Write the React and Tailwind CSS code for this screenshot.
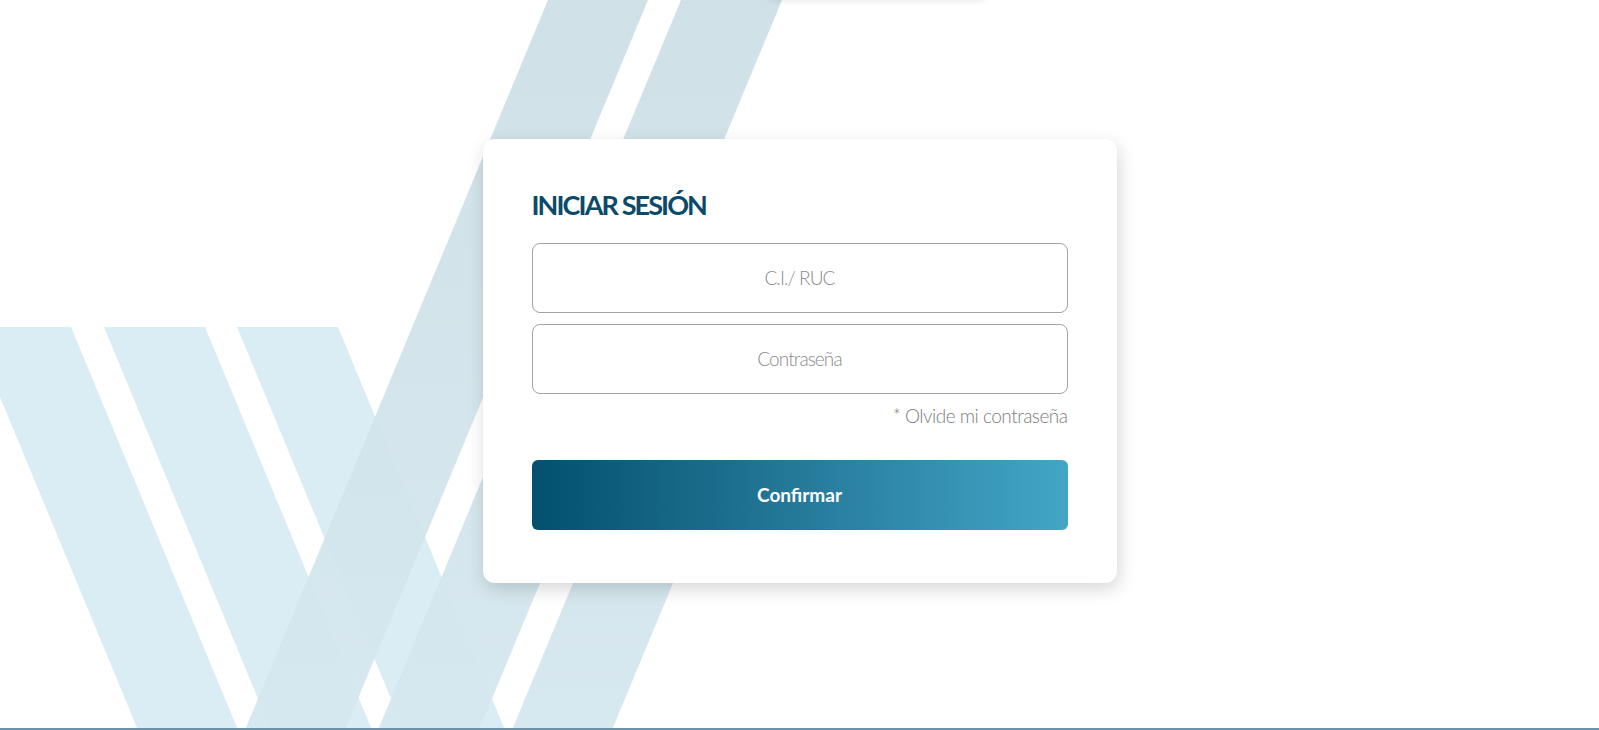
import React from 'react';

// fondo decorativo: franjas diagonales (marca)
function Backdrop() {
  return (
    <svg className="absolute inset-0" width="1599" height="730" viewBox="0 0 1599 730">
      <defs>
        <linearGradient id="darkStripe" x1="0" y1="0" x2="0" y2="1">
          <stop offset="0" stopColor="#cddfe6" />
          <stop offset="1" stopColor="#d5e8ef" />
        </linearGradient>
      </defs>
      {/* franjas claras, bajan hacia la derecha */}
      <polygon points="-29,327 71,327 238,730 138,730" fill="#daedf4" />
      <polygon points="104,327 205,327 372,730 271,730" fill="#daedf4" />
      <polygon points="237,327 338,327 505,730 404,730" fill="#daedf4" />
      {/* franjas oscuras, suben hacia la derecha */}
      <polygon points="548,0 648,0 345,730 245,730" fill="url(#darkStripe)" opacity="0.95" />
      <polygon points="681,0 782,0 479,730 378,730" fill="url(#darkStripe)" opacity="0.95" />
      <polygon points="732,200 832,200 612,730 512,730" fill="url(#darkStripe)" opacity="0.95" />
    </svg>
  );
}

export default function App() {
  return (
    <div className="relative w-full h-[730px] overflow-hidden bg-white" style={{ fontFamily: 'Lato, "Open Sans", sans-serif' }}>
      <Backdrop />

      {/* borde inferior del bloque superior, fuera de la vista */}
      <div className="absolute left-[770px] top-[-20px] w-[215px] h-[20px] bg-white shadow-[0_0_6px_rgba(0,0,0,0.12)]" />

      <main className="relative h-[728px] pb-[6px] flex items-center justify-center">
        <div className="w-[634px] bg-white rounded-[12px] shadow-[2px_6px_18px_rgba(0,0,0,0.16)] px-[49px] pt-[49px] pb-[53px]">
          <h1 className="text-[27px] leading-[34px] font-bold text-[#0b4a68] tracking-[-1.9px]">INICIAR SESIÓN</h1>

          <form className="mt-[21px] flex flex-col" onSubmit={e => e.preventDefault()}>
            <input
              type="text"
              placeholder="C.I./ RUC"
              className="h-[70px] w-full rounded-[8px] border border-[#a3a3a3] bg-white text-center text-[19px] tracking-[-0.9px] font-light text-[#555] placeholder:text-[#8a8a8a] outline-none"
            />
            <input
              type="password"
              placeholder="Contraseña"
              className="mt-[11px] h-[70px] w-full rounded-[8px] border border-[#a3a3a3] bg-white text-center text-[19px] tracking-[-0.9px] font-light text-[#555] placeholder:text-[#8a8a8a] outline-none"
            />
            <a href="#" className="mt-[11px] self-end text-[19px] leading-[1.2] tracking-[-0.5px] font-light text-[#7d7d7d]">* Olvide mi contraseña</a>

            <button
              type="submit"
              className="mt-[33px] h-[70px] w-full rounded-[6px] bg-gradient-to-r from-[#03506f] to-[#43a6c7] text-white text-[19px] font-bold"
            >
              Confirmar
            </button>
          </form>
        </div>
      </main>

      <div className="relative h-[2px] bg-[#6b91ab]" />
    </div>
  );
}
